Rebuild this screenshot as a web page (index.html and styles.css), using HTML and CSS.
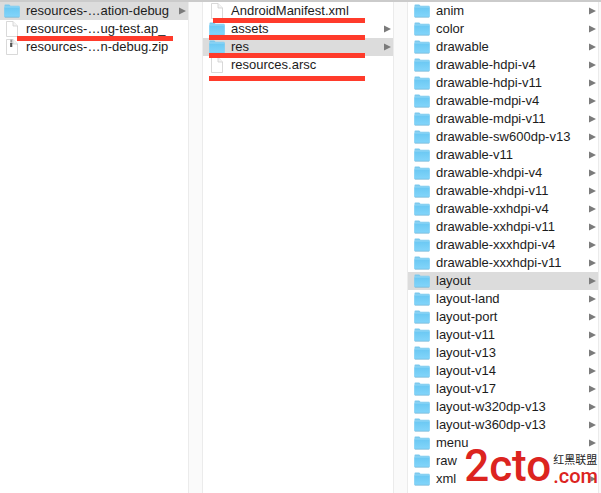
FILE: index.html
```
<!DOCTYPE html>
<html lang="en">
<head>
<meta charset="utf-8">
<title>Files</title>
<link rel="stylesheet" href="styles.css">
</head>
<body>
<svg class="defs" aria-hidden="true">
  <defs>
    <linearGradient id="blue" x1="0" y1="0" x2="0" y2="1">
      <stop offset="0" stop-color="#6ac8f3"/>
      <stop offset="1" stop-color="#83d5fa"/>
    </linearGradient>
    <symbol id="folder" viewBox="0 0 16 16">
      <path d="M.5 2.500Q.5 1.500 1.300 1.500H5.200L6.500 2.700H15Q15.600 2.700 15.600 3.400V13.500Q15.600 14.200 15 14.200H1Q.4 14.200 .4 13.500Z" fill="#7cc9ee"/>
      <path d="M.4 4.200H15.600V13.300Q15.600 13.900 15 13.900H1Q.4 13.900 .4 13.300Z" fill="url(#blue)"/>
      <path d="M.6 4H15.400" stroke="#a5e0fa" stroke-width=".7"/>
      <path d="M.8 14.200H15.200" stroke="#6badcd" stroke-width=".6"/>
    </symbol>
    <symbol id="file" viewBox="0 0 16 16">
      <path d="M2.500 .5H9L13.500 5V15.500H2.500Z" fill="#fff" stroke="#cfcfcf" stroke-width=".8"/>
      <path d="M9 .5V5H13.500" fill="#f4f4f4" stroke="#cfcfcf" stroke-width=".8"/>
    </symbol>
    <symbol id="zip" viewBox="0 0 16 16">
      <path d="M2.500 .5H9L13.500 5V15.500H2.500Z" fill="#fff" stroke="#cfcfcf" stroke-width=".8"/>
      <path d="M9 .5V5H13.500" fill="#f4f4f4" stroke="#cfcfcf" stroke-width=".8"/>
      <path d="M7.300 .8V5" stroke="#777" stroke-width="2" stroke-dasharray="1 .5"/>
      <path d="M6.100 4H8.300V8H6.100Z" fill="#555"/>
    </symbol>
    <symbol id="arrow" viewBox="0 0 7 8"><path d="M0 .5L7 4L0 7.500Z" fill="#7b7b7b"/></symbol>
  </defs>
</svg>
<main class="browser">
  <section class="column first">
    <ul class="list">
      <li class="row selected"><svg class="icon"><use href="#folder"/></svg><span class="name">resources-…ation-debug</span><svg class="arrow"><use href="#arrow"/></svg></li>
      <li class="row"><svg class="icon"><use href="#file"/></svg><span class="name">resources-…ug-test.ap_</span><i class="mark mark-test"></i></li>
      <li class="row"><svg class="icon"><use href="#zip"/></svg><span class="name">resources-…n-debug.zip</span></li>
    </ul>
    <div class="gutter"></div>
  </section>
  <section class="column">
    <ul class="list">
      <li class="row"><svg class="icon"><use href="#file"/></svg><span class="name">AndroidManifest.xml</span><i class="mark mark-manifest"></i></li>
      <li class="row"><svg class="icon"><use href="#folder"/></svg><span class="name">assets</span><svg class="arrow"><use href="#arrow"/></svg><i class="mark"></i></li>
      <li class="row selected"><svg class="icon"><use href="#folder"/></svg><span class="name">res</span><svg class="arrow"><use href="#arrow"/></svg><i class="mark"></i></li>
      <li class="row"><svg class="icon"><use href="#file"/></svg><span class="name">resources.arsc</span><i class="mark mark-low"></i></li>
    </ul>
    <div class="gutter"></div>
  </section>
  <section class="column last">
    <ul class="list" id="resources"></ul>
    <div class="gutter"></div>
    <div class="brand">
      <span class="brand-name">2cto</span>
      <span class="brand-side"><span class="brand-cn" lang="zh">红黑联盟</span><span class="brand-com">.com</span></span>
    </div>
  </section>
</main>
<script src="script.js"></script>
</body>
</html>
```
FILE: styles.css
```
* { box-sizing: border-box; }
body {
  margin: 0;
  background: #fff;
  color: #1c1c1c;
  font: 13px/18px "Liberation Sans", Arial, sans-serif;
}
.defs { position: absolute; width: 0; height: 0; }
.browser {
  display: grid;
  grid-template-columns: 203fr 205fr 193fr;
  min-height: 100vh;
  border-top: 2px solid #cbcbcb;
  overflow: hidden;
}
.column { position: relative; display: flex; min-width: 0; }
.list { flex: 1; min-width: 0; margin: 0; padding: 0; list-style: none; }
.gutter {
  width: 15px;
  background: #fafafa;
  border: solid #ebebeb;
  border-width: 0 1px;
}
.last .gutter { width: 3px; border-right: 0; }
.row {
  position: relative;
  display: flex;
  align-items: center;
  gap: 6px;
  height: 18px;
  padding: 0 2px 0 6px;
  white-space: nowrap;
}
.first .row { padding-left: 4px; }
.selected { background: #dcdcdc; }
.icon { flex: none; width: 16px; height: 16px; }
.name { flex: 1; }
.arrow { flex: none; width: 7px; height: 8px; }
.mark {
  position: absolute;
  z-index: 1;
  left: 6px;
  top: 15px;
  width: 156px;
  height: 5px;
  background: #ff3b2b;
}
.mark-test { left: 17px; top: 16px; }
.mark-manifest { left: 10px; top: 16px; width: 152px; }
.mark-low { top: 20px; }
.brand {
  position: absolute;
  right: 3px;
  bottom: 5px;
  display: flex;
  align-items: flex-end;
  gap: 2px;
  color: #dc241f;
}
.brand-name { font: 500 44px/44px Roboto, "Liberation Sans", sans-serif; }
.brand-side { display: flex; flex-direction: column; padding-bottom: 2px; }
.brand-cn { color: #222; font: 11px/14px "Noto Sans CJK SC", sans-serif; }
.brand-com { font: 500 20px/20px Roboto, "Liberation Sans", sans-serif; }
```
FILE: script.js
```
const names = [
  "anim", "color", "drawable", "drawable-hdpi-v4", "drawable-hdpi-v11",
  "drawable-mdpi-v4", "drawable-mdpi-v11", "drawable-sw600dp-v13",
  "drawable-v11", "drawable-xhdpi-v4", "drawable-xhdpi-v11",
  "drawable-xxhdpi-v4", "drawable-xxhdpi-v11", "drawable-xxxhdpi-v4",
  "drawable-xxxhdpi-v11", "layout", "layout-land", "layout-port",
  "layout-v11", "layout-v13", "layout-v14", "layout-v17",
  "layout-w320dp-v13", "layout-w360dp-v13", "menu", "raw", "xml"
];
const arrow = `<svg class="arrow"><use href="#arrow"/></svg>`;
document.getElementById("resources").innerHTML = names.map(name =>
  `<li class="row${name === "layout" ? " selected" : ""}">` +
  `<svg class="icon"><use href="#folder"/></svg><span class="name">${name}</span>` +
  `${name === "raw" ? "" : arrow}</li>`
).join("");
```
